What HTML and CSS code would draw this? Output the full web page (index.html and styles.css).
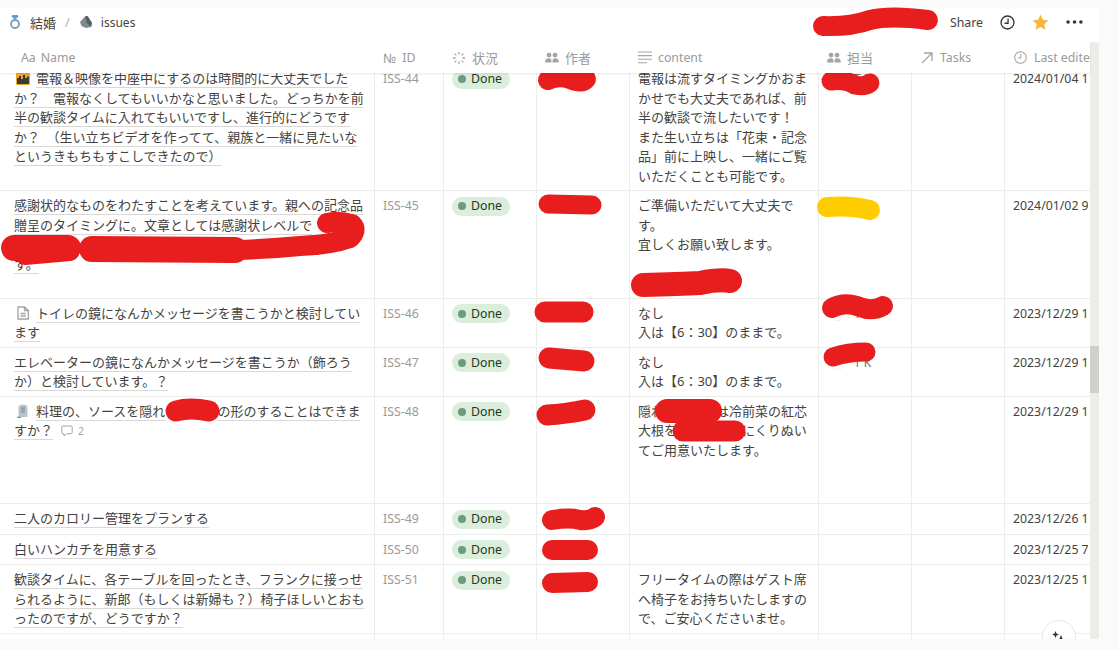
FILE: index.html
```html
<!DOCTYPE html>
<html lang="ja">
<head>
    <meta charset="UTF-8">
    <meta name="viewport" content="width=device-width, initial-scale=1.0">
    <title>issues</title>
    <link rel="stylesheet" href="styles.css">
</head>
<body>

    <div class="page">
        <header class="topbar">
            <div class="crumbs">
                <svg class="crumb-icon" width="12" height="16" viewBox="0 0 12 16">
                    <path d="M3.6 1 H8.4 L9.6 2.6 L6 5.4 L2.4 2.6 Z" fill="#5b9bd5"/>
                    <circle cx="6" cy="10" r="4" fill="none" stroke="#7f98ad" stroke-width="1.8"/>
                </svg>
                <span class="crumb">結婚</span>
                <span class="crumb-sep">/</span>
                <svg class="crumb-icon" width="14" height="14" viewBox="0 0 14 14">
                    <path d="M1 7 L6 1.5 L8.5 1 L13 8 L12 12 L7 13 L2.5 11 Z" fill="#7f8a90"/>
                    <path d="M6 1.5 L8.5 1 L13 8 L12 12 L8 8 Z" fill="#566067"/>
                </svg>
                <span class="crumb crumb-page">issues</span>
            </div>
            <div class="actions">
                <span class="share">Share</span>
                <svg width="15" height="15" viewBox="0 0 16 16">
                    <circle cx="8" cy="8" r="6.9" fill="none" stroke="#37352f" stroke-width="1.4"/>
                    <path d="M8.6 3.6 V8.8 H4.8" fill="none" stroke="#37352f" stroke-width="1.4"/>
                </svg>
                <svg width="17" height="17" viewBox="0 0 18 18">
                    <path d="M9 .8 L11.5 6.2 L17.4 6.9 L13 10.9 L14.2 16.8 L9 13.8 L3.8 16.8 L5 10.9 L.6 6.9 L6.5 6.2 Z" fill="#f6b73c"/>
                </svg>
                <svg width="17" height="4" viewBox="0 0 18 4">
                    <circle cx="2.2" cy="2" r="1.9" fill="#37352f"/>
                    <circle cx="9" cy="2" r="1.9" fill="#37352f"/>
                    <circle cx="15.8" cy="2" r="1.9" fill="#37352f"/>
                </svg>
            </div>
        </header>

        <div class="main">
            <div class="table">
                <div class="row head">
                    <div class="th th-name"><span>Aa</span><span>Name</span></div>
                    <div class="th"><span class="th-cjk">№</span><span>ID</span></div>
                    <div class="th">
                        <svg width="14" height="14" viewBox="0 0 16 16" fill="none" stroke="#a5a4a0" stroke-width="1.5">
                            <path d="M8 1 V4 M8 12 V15 M1 8 H4 M12 8 H15 M3 3 L5 5 M11 11 L13 13 M13 3 L11 5 M5 11 L3 13"/>
                        </svg>
                        <span class="th-cjk">状況</span>
                    </div>
                    <div class="th">
                        <svg width="14" height="11" viewBox="0 0 15 12" fill="#a5a4a0">
                            <circle cx="4.3" cy="3.4" r="2.6"/><circle cx="10.8" cy="3.4" r="2.6"/>
                            <path d="M0 11.5 C0 7.5 2 6.8 4.3 6.8 C6.6 6.8 7 8 7 11.5 Z M8 11.5 C8 8 8.5 6.8 10.8 6.8 C13 6.8 15 7.5 15 11.5 Z"/>
                        </svg>
                        <span class="th-cjk">作者</span>
                    </div>
                    <div class="th">
                        <svg width="14" height="13" viewBox="0 0 14 13" stroke="#a5a4a0" stroke-width="1.1">
                            <path d="M0 1 H14 M0 4.6 H14 M0 8.2 H14 M0 11.8 H9"/>
                        </svg>
                        content
                    </div>
                    <div class="th">
                        <svg width="14" height="11" viewBox="0 0 15 12" fill="#a5a4a0">
                            <circle cx="4.3" cy="3.4" r="2.6"/><circle cx="10.8" cy="3.4" r="2.6"/>
                            <path d="M0 11.5 C0 7.5 2 6.8 4.3 6.8 C6.6 6.8 7 8 7 11.5 Z M8 11.5 C8 8 8.5 6.8 10.8 6.8 C13 6.8 15 7.5 15 11.5 Z"/>
                        </svg>
                        <span class="th-cjk">担当</span>
                    </div>
                    <div class="th th-wide">
                        <svg width="12" height="12" viewBox="0 0 12 12" fill="none" stroke="#a5a4a0" stroke-width="1.3">
                            <path d="M1 11 L11 1 M3 1 H11 V9"/>
                        </svg>
                        Tasks
                    </div>
                    <div class="th th-wide">
                        <svg width="13" height="13" viewBox="0 0 13 13" fill="none" stroke="#a5a4a0" stroke-width="1.1">
                            <circle cx="6.5" cy="6.5" r="5.8"/><path d="M6.8 3 V7 H3.8"/>
                        </svg>
                        Last edited time
                    </div>
                </div>

                <div class="rows">
                    <div class="row first">
                        <div class="td"><svg class="emoji" width="14" height="14" viewBox="0 0 14 14">
                            <rect width="14" height="13" y="1" rx="1.5" fill="#f4a62a"/>
                            <path d="M1 13 V7 H3 V5 H5 V8 H7 V4 H9 V7 H11 V5.5 H13 V13 Z" fill="#3b3a3a"/>
                        </svg><span class="link">電報＆映像を中座中にするのは時間的に大丈夫でしたか？　電報なくしてもいいかなと思いました。どっちかを前半の歓談タイムに入れてもいいですし、進行的にどうですか？　（生い立ちビデオを作ってて、親族と一緒に見たいなというきもちもすこしできたので）</span></div>
                        <div class="td id">ISS-44</div>
                        <div class="td"><span class="pill">Done</span></div>
                        <div class="td"></div>
                        <div class="td">電報は流すタイミングかおまかせでも大丈夫であれば、前半の歓談で流したいです！<br>また生い立ちは「花束・記念品」前に上映し、一緒にご覧いただくことも可能です。</div>
                        <div class="td"><span class="person">T K</span></div>
                        <div class="td"></div>
                        <div class="td date">2024/01/04 10:12</div>
                    </div>

                    <div class="row">
                        <div class="td"><span class="link">感謝状的なものをわたすことを考えています。親への記念品贈呈のタイミングに。文章としては感謝状レベルで</span><span class="masked">〇〇〇〇〇〇〇〇〇〇〇〇〇〇〇〇〇〇〇〇〇〇〇〇〇〇〇〇〇〇〇</span><span class="link">す。</span></div>
                        <div class="td id">ISS-45</div>
                        <div class="td"><span class="pill">Done</span></div>
                        <div class="td"></div>
                        <div class="td">ご準備いただいて大丈夫です。<br>宜しくお願い致します。<br><br><span class="masked">〇〇〇〇〇</span></div>
                        <div class="td"><span class="person">T K</span></div>
                        <div class="td"></div>
                        <div class="td date">2024/01/02 9:40</div>
                    </div>

                    <div class="row">
                        <div class="td"><svg class="emoji" width="14" height="14" viewBox="0 0 14 14" fill="none" stroke="#a3a29e" stroke-width="1.3" stroke-linejoin="round">
                            <path d="M2 1 H8.5 L12.4 4.5 V13 H2 Z M8.5 1 V4.5 H12.4 M4.5 7.5 H9.8 M4.5 10 H9.8"/>
                        </svg><span class="link">トイレの鏡になんかメッセージを書こうかと検討しています</span></div>
                        <div class="td id">ISS-46</div>
                        <div class="td"><span class="pill">Done</span></div>
                        <div class="td"></div>
                        <div class="td">なし<br>入は【6：30】のままで。</div>
                        <div class="td"><span class="person">T K</span></div>
                        <div class="td"></div>
                        <div class="td date">2023/12/29 18:20</div>
                    </div>

                    <div class="row">
                        <div class="td"><span class="link">エレベーターの鏡になんかメッセージを書こうか（飾ろうか）と検討しています。？</span></div>
                        <div class="td id">ISS-47</div>
                        <div class="td"><span class="pill">Done</span></div>
                        <div class="td"></div>
                        <div class="td">なし<br>入は【6：30】のままで。</div>
                        <div class="td"><span class="person">T K</span></div>
                        <div class="td"></div>
                        <div class="td date">2023/12/29 18:20</div>
                    </div>

                    <div class="row">
                        <div class="td"><svg class="emoji" width="14" height="14" viewBox="0 0 14 14">
                            <path d="M2.5 13 V3.5 C2.5 1.5 4.5 .6 7 .6 C9.5 .6 11.5 1.5 11.5 3.5 V13 Z" fill="#b9c4ca"/>
                            <path d="M5 4 H9 M5 6 H9 M5 8 H9" stroke="#76838a" stroke-width="1"/>
                            <path d="M1 13.4 H5" stroke="#5fa860" stroke-width="1.4"/>
                        </svg><span class="link">料理の、ソースを隠れ</span><span class="masked">〇〇〇〇</span><span class="link">の形のすることはできますか？</span><span class="comments"><svg width="12" height="12" viewBox="0 0 12 12" fill="none" stroke="#a5a4a0" stroke-width="1">
                            <path d="M2 1 H10 Q11.2 1 11.2 2.2 V7.6 Q11.2 8.8 10 8.8 H5.6 L3 11 V8.8 H2 Q.8 8.8 .8 7.6 V2.2 Q.8 1 2 1 Z"/>
                        </svg>2</span></div>
                        <div class="td id">ISS-48</div>
                        <div class="td"><span class="pill">Done</span></div>
                        <div class="td"></div>
                        <div class="td">隠れ<span class="masked">〇〇〇〇</span>は冷前菜の紅芯大根を<span class="masked">〇〇〇〇〇</span>にくりぬいてご用意いたします。<br><br><br></div>
                        <div class="td"></div>
                        <div class="td"></div>
                        <div class="td date">2023/12/29 18:20</div>
                    </div>

                    <div class="row single">
                        <div class="td"><span class="link">二人のカロリー管理をプランする</span></div>
                        <div class="td id">ISS-49</div>
                        <div class="td"><span class="pill">Done</span></div>
                        <div class="td"></div>
                        <div class="td"></div>
                        <div class="td"></div>
                        <div class="td"></div>
                        <div class="td date">2023/12/26 11:05</div>
                    </div>

                    <div class="row single">
                        <div class="td"><span class="link">白いハンカチを用意する</span></div>
                        <div class="td id">ISS-50</div>
                        <div class="td"><span class="pill">Done</span></div>
                        <div class="td"></div>
                        <div class="td"></div>
                        <div class="td"></div>
                        <div class="td"></div>
                        <div class="td date">2023/12/25 7:30</div>
                    </div>

                    <div class="row">
                        <div class="td"><span class="link">歓談タイムに、各テーブルを回ったとき、フランクに接っせられるように、新郎（もしくは新婦も？）椅子ほしいとおもったのですが、どうですか？</span></div>
                        <div class="td id">ISS-51</div>
                        <div class="td"><span class="pill">Done</span></div>
                        <div class="td"></div>
                        <div class="td">フリータイムの際はゲスト席へ椅子をお持ちいたしますので、ご安心くださいませ。</div>
                        <div class="td"></div>
                        <div class="td"></div>
                        <div class="td date">2023/12/25 12:15</div>
                    </div>

                    <div class="row">
                        <div class="td tail"></div><div class="td"></div><div class="td"></div><div class="td"></div>
                        <div class="td"></div><div class="td"></div><div class="td"></div><div class="td"></div>
                    </div>
                </div>
            </div>

            <div class="scrollbar"><div class="thumb"></div></div>

            <div class="ai-button">
                <svg width="14" height="14" viewBox="0 0 14 14" fill="#37352f">
                    <path d="M3.5 0 L4.5 2.5 L7 3.5 L4.5 4.5 L3.5 7 L2.5 4.5 L0 3.5 L2.5 2.5 Z"/>
                    <path d="M9 4 L10.6 8 L14 9.5 L10.6 11 L9 14 L7.4 11 L4 9.5 L7.4 8 Z"/>
                </svg>
            </div>
        </div>
    </div>

    <!-- the marker strokes drawn over the screenshot -->
    <svg class="marks" width="1119" height="650" viewBox="0 0 1119 650" fill="none" stroke="#e81e1e" stroke-linecap="round" stroke-linejoin="round">
        <path stroke-width="20" d="M823 26 Q850 27 870 20 Q890 15 928 20"/>
        <path stroke-width="20" d="M548 80 Q558 75 570 79 Q582 84 586 79"/>
        <path stroke-width="19" d="M831 81 Q845 79 855 85 Q865 87 870 83"/>
        <path stroke-width="19" d="M548 204 L592 205"/>
        <path stroke-width="20" stroke="#ffcc00" d="M827 207 Q850 205 870 210"/>
        <path stroke-width="20" d="M327 223 Q338 220 352 224 Q358 230 350 238"/>
        <path stroke-width="20" d="M350 238 Q330 245 300 246 Q270 249 235 250"/>
        <path stroke-width="26" d="M14 248 L68 248 M92 249 L235 250"/>
        <path stroke-width="18" d="M25 256 L70 252"/>
        <path stroke-width="24" d="M643 285 Q680 284 700 283 Q720 279 730 281"/>
        <path stroke-width="21" d="M545 312 L583 312"/>
        <path stroke-width="20" d="M832 308 Q845 301 860 307 Q872 312 883 306"/>
        <path stroke-width="21" d="M549 358 L584 361"/>
        <path stroke-width="19" d="M833 357 Q848 352 866 352"/>
        <path stroke-width="21" d="M547 415 Q565 414 585 410"/>
        <path stroke-width="21" d="M176 411 Q190 407 209 411"/>
        <path stroke-width="24" d="M667 411 L710 411"/>
        <path stroke-width="21" d="M683 431 L735 431"/>
        <path stroke-width="20" d="M552 520 Q570 517 580 520 Q590 521 595 517"/>
        <path stroke-width="20" d="M552 550 L588 550"/>
        <path stroke-width="20" d="M552 583 L588 582"/>
    </svg>

</body>
</html>
```

FILE: styles.css
```css
html, body {
    height: 100%;
}
body {
    margin: 0;
    background-color: #fafafa;
    color: #44423d;
    font-family: "Noto Sans", "Noto Sans CJK JP", sans-serif;
    font-size: 13px;
    overflow: hidden;
}
.page {
    display: flex;
    flex-direction: column;
    width: 1099px;
    height: 631px;
    margin-top: 8px;
    background-color: #fff;
    overflow: hidden;
}
.topbar {
    display: flex;
    align-items: center;
    justify-content: space-between;
    flex: none;
    height: 28px;
    padding: 0 16px 6px 9px;
}
.crumbs {
    display: flex;
    align-items: center;
}
.crumb {
    margin-left: 9px;
    font-size: 13px;
}
.crumb-sep {
    margin: 0 9px;
    color: #b5b4b0;
}
.crumb-page {
    margin-left: 8px;
    font-size: 12px;
}
.actions {
    display: flex;
    align-items: center;
    gap: 17px;
}
.share {
    font-size: 12.3px;
}
.main {
    position: relative;
    display: flex;
    flex: 1;
    min-height: 0;
}
.table {
    flex: 1;
    display: flex;
    flex-direction: column;
    min-width: 0;
}
.row {
    display: grid;
    grid-template-columns: 375px 69px 93px 93px 189px 93px 93px 85px;
    border-bottom: 1px solid #ededec;
}
.head {
    position: relative;
    z-index: 1;
    flex: none;
    height: 31px;
    background-color: #fff;
    border-bottom: none;
    box-shadow: 0 1px 2px rgba(0, 0, 0, 0.1);
}
.th {
    display: flex;
    align-items: center;
    gap: 6px;
    padding-left: 8px;
    color: #9b9a97;
    font-size: 12.3px;
    white-space: nowrap;
    overflow: hidden;
}
.th svg {
    flex: none;
}
.th-name {
    padding-left: 21px;
    gap: 5px;
}
.th-cjk {
    font-size: 13px;
}
.th-wide {
    gap: 7px;
    padding-left: 9px;
}
.rows {
    flex: 1;
    overflow: hidden;
}
.first {
    margin-top: -9px;
}
.td {
    padding: 5px 8px 4px;
    border-right: 1px solid #ededec;
    line-height: 19.5px;
    min-width: 0;
}
.td:first-child {
    padding-left: 14px;
}
.td:last-child {
    margin-right: 2px;
    padding-right: 0;
    border-right: none;
    white-space: nowrap;
    overflow: hidden;
}
.single {
    min-height: 29.5px;
}
.link {
    text-decoration: underline;
    text-decoration-color: #d8d8d6;
    text-decoration-thickness: 1px;
    text-decoration-skip-ink: none;
    text-underline-offset: 4px;
}
/* text under a marker stroke, only there to keep the line breaks */
.masked {
    color: transparent;
}
.emoji {
    margin: 0 6px 0 2px;
    vertical-align: -2px;
}
.comments {
    margin-left: 8px;
    color: #a5a4a0;
    font-size: 10.5px;
}
.comments svg {
    margin-right: 5px;
    vertical-align: -2px;
}
.id {
    color: #9b9a97;
    font-size: 12.3px;
}
.pill {
    display: inline-flex;
    align-items: center;
    height: 19px;
    padding: 0 8px 0 6px;
    border-radius: 10px;
    background-color: #dbeddb;
    color: #1c3829;
    font-size: 12.3px;
}
.pill::before {
    content: "";
    width: 8px;
    height: 8px;
    margin-right: 5px;
    border-radius: 50%;
    background-color: #6c9b7d;
}
.person {
    display: inline-flex;
    align-items: center;
    gap: 9px;
    margin-left: 3px;
    color: #73726e;
    font-size: 12px;
}
.person::before {
    content: "";
    width: 13px;
    height: 13px;
    border: 1px solid #ededec;
    border-radius: 50%;
}
.date {
    font-size: 12.3px;
}
.scrollbar {
    flex: none;
    width: 9px;
    background-color: #edece9;
}
.thumb {
    height: 47px;
    margin-top: 304px;
    background-color: #cfcfcb;
}
.ai-button {
    position: absolute;
    right: 23px;
    bottom: -15px;
    display: flex;
    justify-content: center;
    width: 34px;
    height: 34px;
    padding-top: 10px;
    box-sizing: border-box;
    border: 1px solid #e6e6e4;
    border-radius: 50%;
    background-color: #fff;
}
.marks {
    position: absolute;
    top: 0;
    left: 0;
}
```
